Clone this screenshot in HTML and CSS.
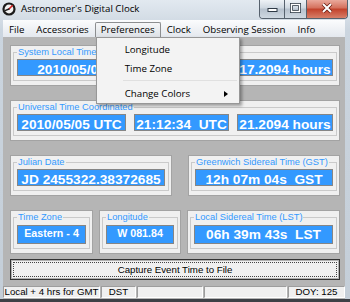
FILE: index.html
```html
<!doctype html>
<html>
<head>
    <title>Astronomer's Digital Clock</title>
    <link rel="stylesheet" href="styles.css">
</head>
<body>
    <div class="window">
        <div class="titlebar">
            <svg class="app-icon" width="14" height="14" viewBox="0 0 14 14">
                <circle cx="7" cy="7" r="6.6" fill="#1c1c1c"/>
                <circle cx="7" cy="7" r="4.4" fill="#f2f2f2"/>
                <path d="M7 7 L10.2 3.8" stroke="#d42020" stroke-width="1.6" stroke-linecap="round"/>
                <path d="M7 7 L3.6 8.4" stroke="#1c1c1c" stroke-width="1.4" stroke-linecap="round"/>
            </svg>
            <span class="title">Astronomer's Digital Clock</span>
            <div class="caption">
                <span class="cap cap-min">
                    <svg width="11" height="10" viewBox="0 0 11 10"><rect x="1" y="5.5" width="9" height="3" fill="#fff" stroke="#2f3a46"/></svg>
                </span>
                <span class="cap cap-max">
                    <svg width="11" height="10" viewBox="0 0 11 10"><rect x="1.5" y="1.5" width="8" height="7" fill="none" stroke="#2f3a46" stroke-width="3"/><rect x="1.5" y="1.5" width="8" height="7" fill="none" stroke="#fff" stroke-width="1.4"/></svg>
                </span>
                <span class="cap cap-close">
                    <svg width="12" height="10" viewBox="0 0 12 10"><path d="M2 1 L10 9 M10 1 L2 9" stroke="#6b1d12" stroke-width="3.6"/><path d="M2 1 L10 9 M10 1 L2 9" stroke="#fff" stroke-width="2"/></svg>
                </span>
            </div>
        </div>

        <div class="client">
            <div class="menubar">
                <div class="menu-item">File</div>
                <div class="menu-item">Accessories</div>
                <div class="menu-item open">Preferences
                    <div class="dropdown">
                        <div class="drop-item">Longitude</div>
                        <div class="drop-item">Time Zone</div>
                        <div class="drop-sep"></div>
                        <div class="drop-item sub">Change Colors</div>
                    </div>
                </div>
                <div class="menu-item">Clock</div>
                <div class="menu-item">Observing Session</div>
                <div class="menu-item">Info</div>
            </div>

            <div class="content">
                <div class="panel">
                    <fieldset class="group">
                        <legend>System Local Time</legend>
                        <div class="fields">
                            <div class="field">2010/05/05</div>
                            <!-- hidden under the open menu in the screenshot -->
                            <div class="field"></div>
                            <div class="field">17.2094 hours</div>
                        </div>
                    </fieldset>
                </div>

                <div class="panel">
                    <fieldset class="group">
                        <legend>Universal Time Coordinated</legend>
                        <div class="fields">
                            <div class="field">2010/05/05 UTC</div>
                            <div class="field">21:12:34  UTC</div>
                            <div class="field">21.2094 hours</div>
                        </div>
                    </fieldset>
                </div>

                <div class="row row-julian">
                    <div class="panel">
                        <fieldset class="group">
                            <legend>Julian Date</legend>
                            <div class="field">JD 2455322.38372685</div>
                        </fieldset>
                    </div>
                    <div class="panel">
                        <fieldset class="group">
                            <legend>Greenwich Sidereal Time (GST)</legend>
                            <div class="field">12h 07m 04s  GST</div>
                        </fieldset>
                    </div>
                </div>

                <div class="row row-zone">
                    <div class="panel">
                        <fieldset class="group tall">
                            <legend>Time Zone</legend>
                            <div class="field small">Eastern - 4</div>
                        </fieldset>
                    </div>
                    <div class="panel">
                        <fieldset class="group tall">
                            <legend>Longitude</legend>
                            <div class="field small">W 081.84</div>
                        </fieldset>
                    </div>
                    <div class="panel">
                        <fieldset class="group tall">
                            <legend>Local Sidereal Time (LST)</legend>
                            <div class="field big">06h 39m 43s  LST</div>
                        </fieldset>
                    </div>
                </div>

                <div class="capture"><span>Capture Event Time to File</span></div>
            </div>

            <div class="statusbar">
                <div class="status s-gmt">Local + 4 hrs for GMT</div>
                <div class="status s-dst">DST</div>
                <div class="status s-a"></div>
                <div class="status s-b"></div>
                <div class="status s-doy">DOY: 125</div>
            </div>
        </div>
    </div>
</body>
</html>
```

FILE: styles.css
```css
* {
    box-sizing: border-box;
}
html, body {
    margin: 0;
}
body {
    width: 350px;
    height: 302px;
    overflow: hidden;
    background: #3d4046;
    font-family: "Liberation Sans", Arial, sans-serif;
}
.window {
    height: 299px;
    display: flex;
    flex-direction: column;
    background: linear-gradient(#e2e9f0, #cbd5df 30px, #c4ced8);
}

/* Title bar */
.titlebar {
    height: 20px;
    display: flex;
    align-items: flex-start;
}
.app-icon {
    margin: 2px 0 0 2px;
}
.title {
    margin-left: 5px;
    font: 9.7px "Open Sans", sans-serif;
    line-height: 18px;
    color: #000;
}
.caption {
    margin-left: auto;
    margin-right: 2px;
    height: 19px;
    display: flex;
    border: 1px solid #56616d;
    border-top: 0;
    border-radius: 0 0 4px 4px;
    overflow: hidden;
}
.cap {
    display: flex;
    justify-content: center;
    padding-top: 3px;
}
.cap-min, .cap-max {
    background: linear-gradient(#eef2f6, #ced7e0 45%, #b6c1cd 50%, #cfd8e1);
    border-right: 1px solid #56616d;
}
.cap-min {
    width: 25px;
}
.cap-max {
    width: 22px;
}
.cap-close {
    width: 40px;
    background: linear-gradient(#eaa99c, #d46f5b 45%, #c2412b 50%, #d77f69);
}

/* Client area */
.client {
    flex: 1;
    margin: 0 5px 0 3px;
    background: #b5b5b5;
    display: flex;
    flex-direction: column;
}
.menubar {
    height: 17px;
    display: flex;
    align-items: flex-end;
    background: linear-gradient(#fbfcfd, #e4e8ee);
    font: 9.7px "Open Sans", sans-serif;
    color: #000;
}
.menu-item {
    height: 15px;
    line-height: 13px;
    padding: 0 5px;
    border: 1px solid transparent;
    border-bottom: 0;
    white-space: nowrap;
}
.menu-item.open {
    position: relative;
    border-color: #8c8e90;
    border-radius: 2px 2px 0 0;
    background: linear-gradient(#f6f7f8, #dde1e6);
}
.dropdown {
    position: absolute;
    left: 0;
    top: 14px;
    width: 144px;
    padding: 2px 2px 0;
    border: 1px solid #979797;
    background: #f3f3f3;
    box-shadow: 2px 2px 3px rgba(0, 0, 0, 0.35);
    z-index: 2;
}
.drop-item {
    height: 19px;
    line-height: 19px;
    padding-left: 26px;
    position: relative;
}
.drop-item.sub::after {
    content: "";
    position: absolute;
    right: 9px;
    top: 7px;
    border-left: 4px solid #000;
    border-top: 3px solid transparent;
    border-bottom: 3px solid transparent;
}
.drop-sep {
    height: 6px;
    margin-left: 24px;
    border-top: 2px solid #f3f3f3;
    border-bottom: 3px solid #f3f3f3;
    background: #e0e0e0;
}

.content {
    flex: 1;
    display: flex;
    flex-direction: column;
    gap: 14px;
    padding: 8px 5px 0 7px;
}

/* Group boxes */
.panel {
    background: #f0f0f0;
    border: 1px solid #a3a3a3;
    padding: 0 2px 4px;
}
.group {
    margin: 0;
    min-width: 0;
    padding: 1px 3px 4px;
    border: 1px solid #cacaca;
}
.group.tall {
    padding-top: 2px;
}
.group legend {
    padding: 0 1px;
    font-size: 9.3px;
    line-height: 12px;
    color: #3399ff;
}
.fields {
    display: grid;
    grid-template-columns: 109px 95px 1fr;
    column-gap: 8px;
}
.field {
    height: 17px;
    padding-top: 2px;
    background: #3399ff;
    border: 1px solid #858585;
    color: #fff;
    font-weight: bold;
    font-size: 13.7px;
    line-height: 15px;
    text-align: center;
    white-space: pre;
}
.field.small {
    height: 19px;
    padding-top: 0;
    font-size: 10.7px;
    line-height: 14px;
}
.field.big {
    height: 19px;
    padding-top: 0;
    line-height: 17px;
}
.row {
    display: grid;
}
.row-julian {
    grid-template-columns: 162px 1fr;
    column-gap: 16px;
}
.row-zone {
    grid-template-columns: 83px 82px 1fr;
    column-gap: 6px;
}

/* Button */
.capture {
    margin-top: -9px;
    height: 21px;
    padding: 2px;
    background: #f0f0f0;
    border: 1px solid #333;
    box-shadow: inset 0 0 0 1px #b0b0b0;
}
.capture span {
    display: block;
    height: 15px;
    border: 1px dotted #444;
    font-size: 9.7px;
    line-height: 13px;
    text-align: center;
    color: #000;
}

/* Status bar */
.statusbar {
    height: 15px;
    display: flex;
    gap: 1px;
    padding: 2px 0 1px;
    margin-top: 4px;
}
.status {
    border: 1px solid;
    border-color: #9d9d9d #fff #fff #9d9d9d;
    background: #f0f0f0;
    font-size: 9.7px;
    line-height: 10px;
    text-align: center;
    color: #000;
    white-space: nowrap;
}
.s-gmt {
    width: 97px;
}
.s-dst {
    width: 35px;
}
.s-a {
    width: 66px;
}
.s-b {
    width: 83px;
}
.s-doy {
    flex: 1;
}
```
